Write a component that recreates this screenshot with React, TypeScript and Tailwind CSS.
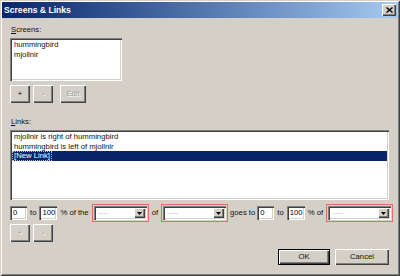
import React from "react";

const font = { fontFamily: '"Liberation Sans", Arial, sans-serif' };

const raised =
  "bg-[#d4d0c8] shadow-[inset_1px_1px_0_#ffffff,inset_-1px_-1px_0_#404040,inset_-2px_-2px_0_#808080]";
const sunken =
  "bg-white shadow-[inset_1px_1px_0_#808080,inset_2px_2px_0_#404040,inset_-1px_-1px_0_#ffffff,inset_-2px_-2px_0_#d4d0c8]";

function Btn({ label, w, disabled }: { label: string; w: string; disabled?: boolean }) {
  return (
    <div
      className={`${raised} ${w} h-[18px] shrink-0 flex items-center justify-center text-[7.7px] ${
        disabled ? "text-[#a0a0a0] [text-shadow:1px_1px_0_#ffffff]" : "text-black"
      }`}
    >
      {label}
    </div>
  );
}

function Field({ value, w }: { value: string; w: string }) {
  return (
    <div className={`${sunken} ${w} h-[14px] shrink-0 flex items-center pl-[3px] text-[7.7px] text-black`}>
      {value}
    </div>
  );
}

function Combo({ w }: { w: string }) {
  return (
    <div className={`${w} h-[18px] shrink-0 border border-[#e86a6a] p-[1px]`}>
      <div className={`${sunken} h-full flex items-center justify-between pl-[4px] pr-[2px]`}>
        <span className="text-[7px] text-[#b0b0b0] tracking-[0.5px]">----</span>
        <div className={`${raised} w-[11px] h-[10px] flex items-center justify-center`}>
          <svg width="5" height="3" viewBox="0 0 5 3">
            <path d="M0 0h5L2.5 3z" fill="#000" />
          </svg>
        </div>
      </div>
    </div>
  );
}

export default function App() {
  const links = ["mjollnir is right of hummingbird", "hummingbird is left of mjollnir"];

  return (
    <div
      style={font}
      className="w-[400px] h-[276px] bg-[#d4d0c8] p-[2px] flex flex-col shadow-[inset_1px_1px_0_#d4d0c8,inset_-1px_-1px_0_#404040,inset_2px_2px_0_#ffffff,inset_-2px_-2px_0_#808080]"
    >
      {/* title bar */}
      <div className="h-[16px] bg-gradient-to-r from-[#0a246a] to-[#a6caf0] flex items-center justify-between pl-[2px] pr-[2px]">
        <span className="text-white font-bold text-[8.6px]">Screens &amp; Links</span>
        <div className={`${raised} w-[14px] h-[12px] flex items-center justify-center`}>
          <svg width="7" height="6" viewBox="0 0 7 6">
            <path d="M0.5 0.5L6.5 5.5M6.5 0.5L0.5 5.5" stroke="#000" strokeWidth="1.4" />
          </svg>
        </div>
      </div>

      <div className="px-[8px] flex flex-col text-[7.7px] text-[#111]">
        <div className="mt-[7px] h-[10px] leading-[10px] pl-[1px]">
          <span className="underline">S</span>creens:
        </div>
        <div className={`${sunken} mt-[3px] w-[112px] h-[43px] pt-[2px] pl-[4px]`}>
          <div className="leading-[9.5px]">hummingbird</div>
          <div className="leading-[9.5px]">mjollnir</div>
        </div>
        <div className="mt-[4px] flex gap-[3px]">
          <Btn label="+" w="w-[20px]" />
          <Btn label="-" w="w-[20px]" disabled />
          <div className="w-[1px]" />
          <Btn label="Edit" w="w-[26px]" disabled />
        </div>

        <div className="mt-[14px] h-[10px] leading-[10px] pl-[1px]">
          <span className="underline">L</span>inks:
        </div>
        <div className={`${sunken} mt-[3px] w-[379px] h-[70px] p-[2px]`}>
          {links.map((l) => (
            <div key={l} className="leading-[9.5px] h-[9.5px] pl-[2px]">
              {l}
            </div>
          ))}
          <div className="h-[9.5px] bg-[#0a246a] text-white flex items-center pl-[1px]">
            <span className="outline outline-1 outline-dotted outline-[#c0c0c0] leading-[8px] px-[1px]">
              [New Link]
            </span>
          </div>
        </div>

        <div className="mt-[4px] flex items-center gap-[2px] whitespace-nowrap">
          <Field value="0" w="w-[17px]" />
          <span className="mx-[1px]">to</span>
          <Field value="100" w="w-[18px]" />
          <span className="mx-[1px]">% of the</span>
          <Combo w="w-[57px]" />
          <span className="mx-[1px]">of</span>
          <Combo w="w-[67px]" />
          <span>goes to</span>
          <Field value="0" w="w-[17px]" />
          <span className="mx-[1px]">to</span>
          <Field value="100" w="w-[18px]" />
          <span className="mx-[1px]">% of</span>
          <Combo w="w-[67px]" />
        </div>

        <div className="mt-[2px] flex gap-[3px]">
          <Btn label="+" w="w-[20px]" disabled />
          <Btn label="-" w="w-[20px]" disabled />
        </div>

        <div className="mt-[7px] flex justify-end gap-[5px] pr-[1px]">
          <div className="border border-black">
            <div className={`${raised} w-[50px] h-[14px] flex items-center justify-center`}>OK</div>
          </div>
          <div className={`${raised} w-[54px] h-[16px] flex items-center justify-center`}>Cancel</div>
        </div>
      </div>
    </div>
  );
}
